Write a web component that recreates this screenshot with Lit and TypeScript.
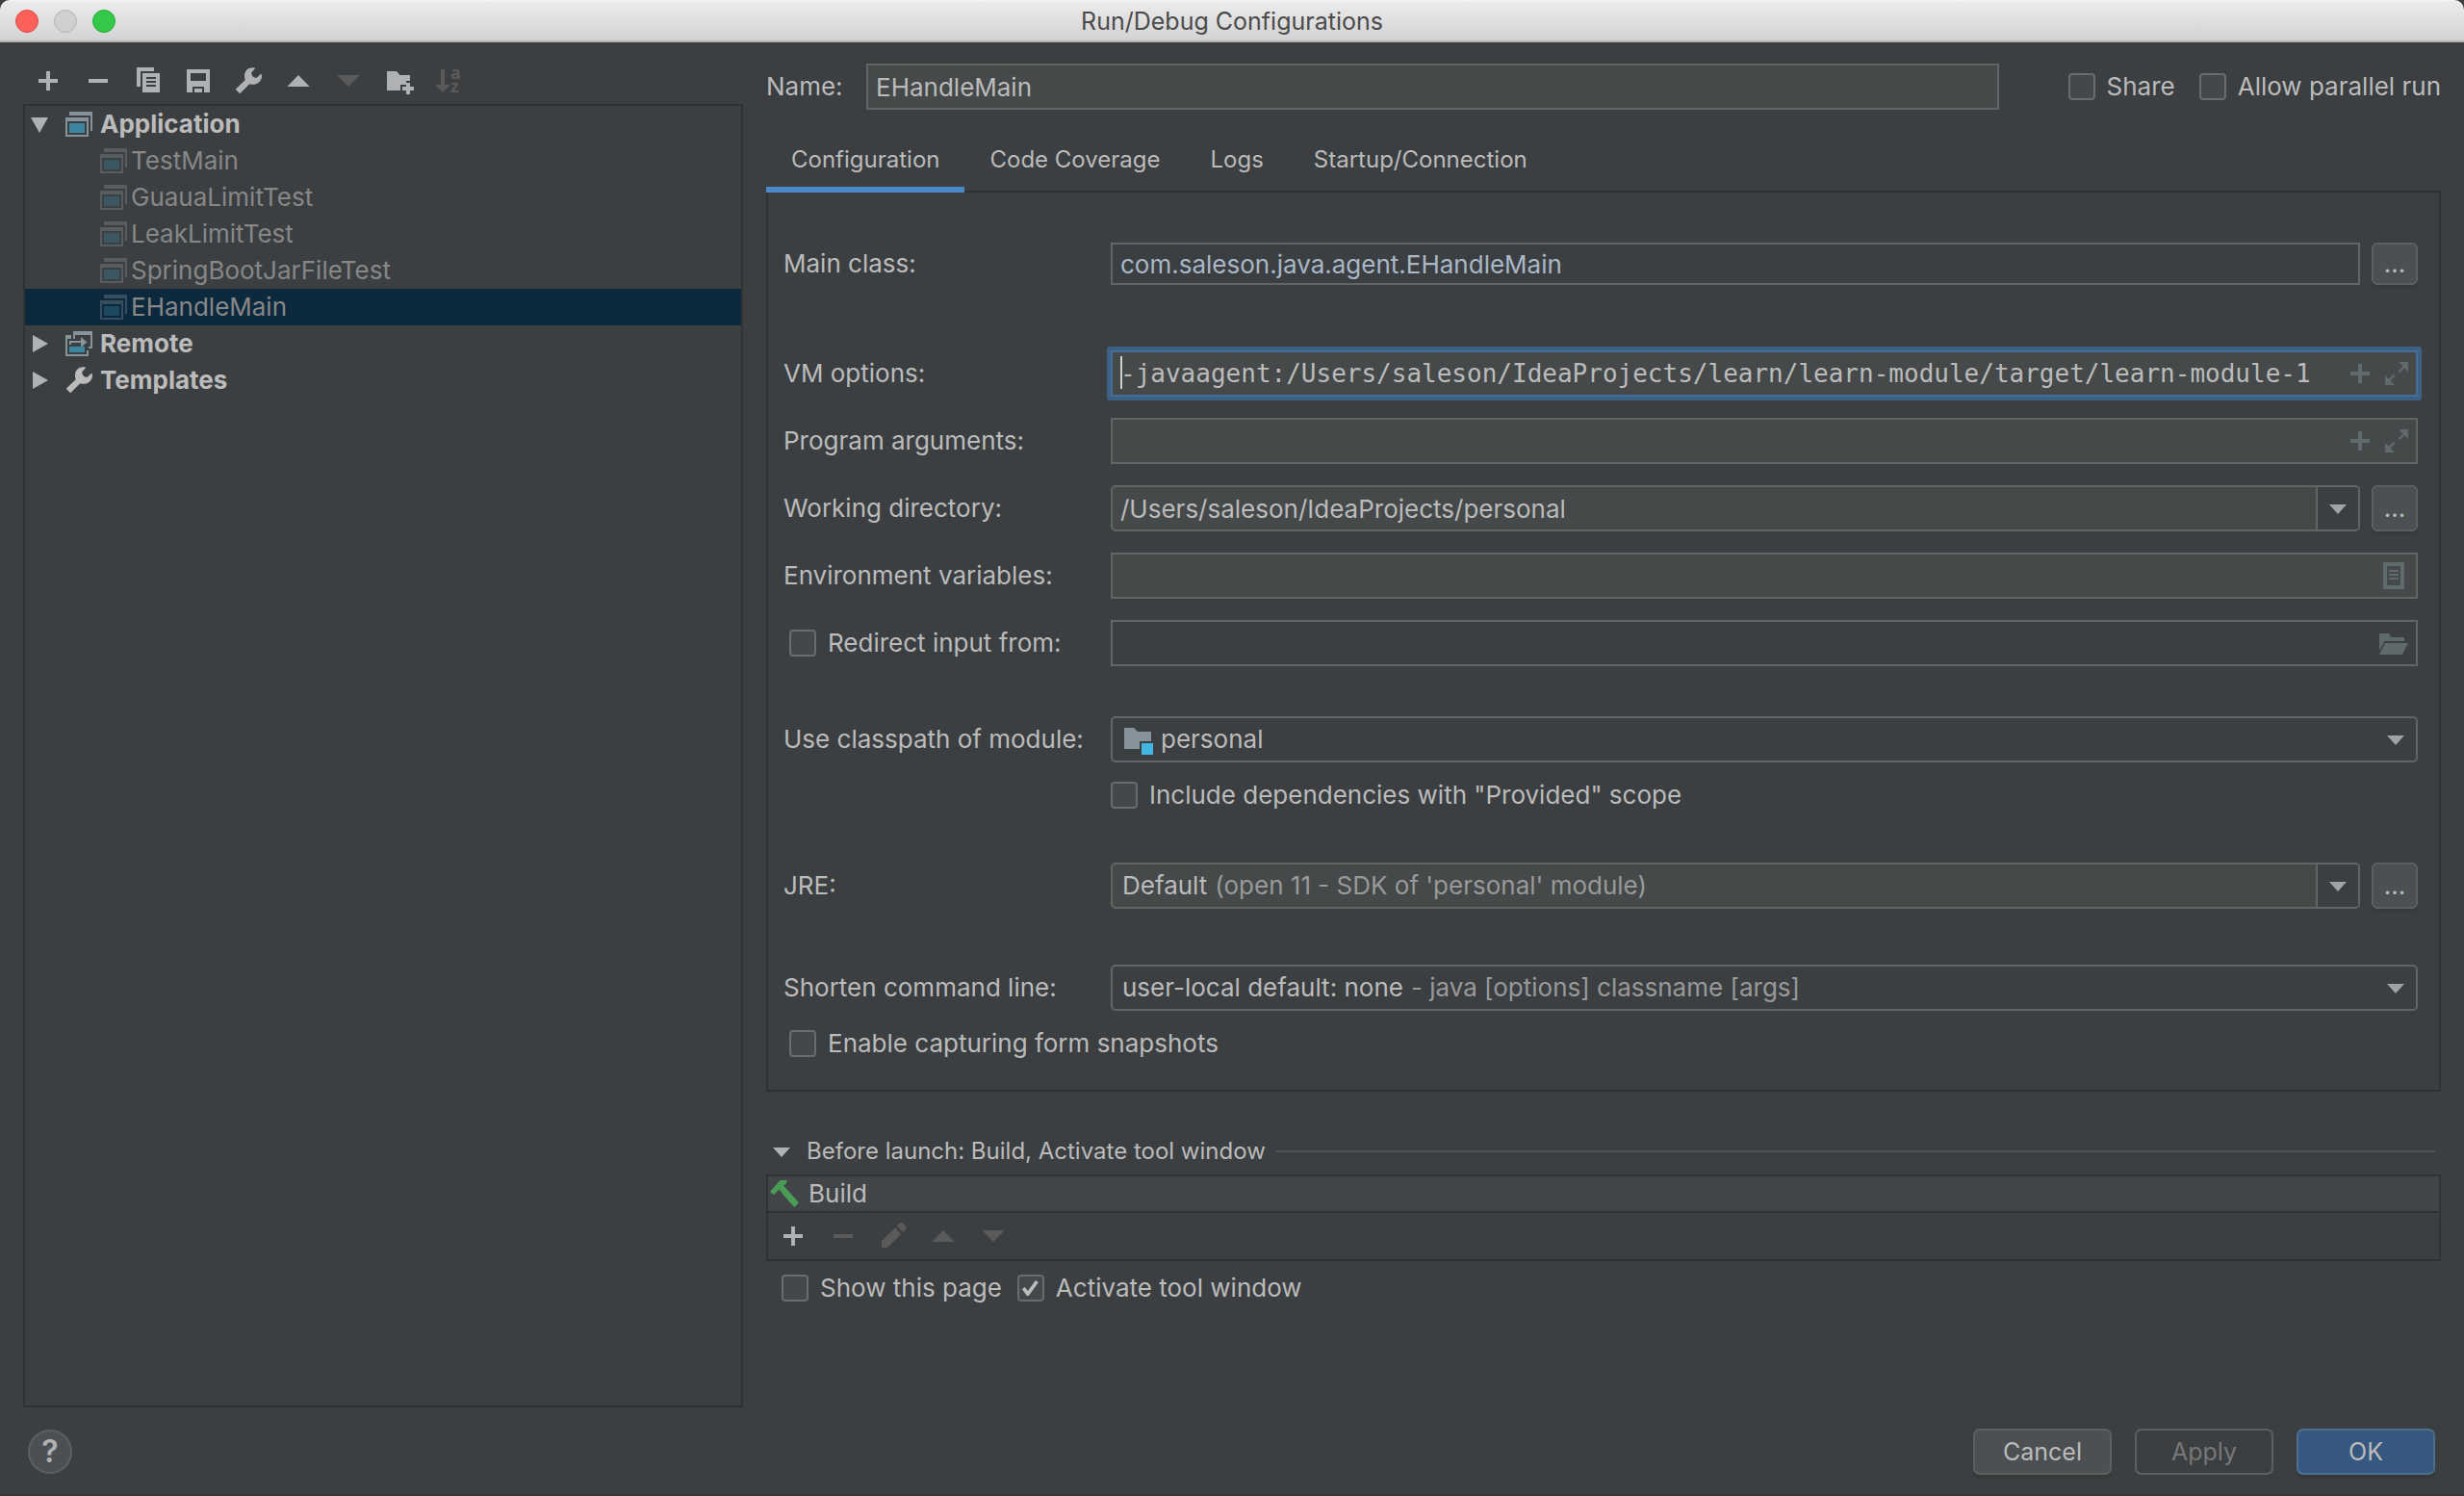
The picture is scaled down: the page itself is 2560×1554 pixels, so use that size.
import { LitElement, html, css, svg, nothing } from "lit";
import { customElement, property } from "lit/decorators.js";

const glyphs: Record<string, unknown> = {
  plus: svg`<path d="M14 6h4v8h8v4h-8v8h-4v-8H6v-4h8z"/>`,
  minus: svg`<path d="M6 14h20v4H6z"/>`,
  copy: svg`<path d="M4 2h18v4H8v16H4z"/><path fill-rule="evenodd" d="M10 8h18v20H10zM14 12v2h10v-2zM14 16v2h10v-2zM14 20v2h10v-2z"/>`,
  save: svg`<path fill-rule="evenodd" d="M4 4h24v24h-6v-6H10v6H4zM8 8v8h16V8z"/><path d="M12 24h8v4h-8z"/>`,
  wrench: svg`<path d="M23.3 2.8C18 1 12 4.5 12 10.5C12 12.5 12.3 14 12.8 15L2.7 24.8L7.2 29.3L17.3 19.2C23 21.5 29.8 17.5 30 11.5C30 10.2 29.8 9.2 29.3 8.5L24.8 12.8C22 13.2 19 10.5 19.3 7.2z"/>`,
  up: svg`<path d="M16 10L27.7 22H4.3z"/>`,
  down: svg`<path d="M4.3 10H27.7L16 22z"/>`,
  folderPlus: svg`<path d="M4 6h10l3.5 4H28v6h-4v4h-6v6H4z"/><path d="M24 18h4v4h4v4h-4v4h-4v-4h-4v-4h4z"/>`,
  sort: svg`<path d="M8 4h4v16h5.7L10 28 2.3 20H8z"/><text class="letter"><tspan x="18" y="14">a</tspan><tspan x="18" y="28">z</tspan></text>`,
  open: svg`<path d="M6 9H24L15 25z"/>`,
  closed: svg`<path d="M8 7L24 16L8 25z"/>`,
  app: svg`<g fill="#87939a"><path d="M6 3h24v20h-2V7H6z"/><path fill-rule="evenodd" d="M2 9h24v20H2zM4 13v14h20V13z"/></g><path fill="#3e86a0" d="M6 15h16v10H6z"/>`,
  remote: svg`<g fill="#87939a"><path d="M10 3h20v18h-4v-2h2V7H12v4h-2z"/><path d="M2 7h6v4H4v16h20v-4h2v6H2z"/><path d="M6 13h12V9l6.5 5.5L18 20v-5H8v2H6z"/></g><path fill="#3e86a0" d="M6 19h16v6H6z"/>`,
  expand: svg`<path d="M18 4h10v10l-3.8-3.8-5 5-1.7-1.7 5-5z"/><path d="M14 28H4V18l3.8 3.8 5-5 1.7 1.7-5 5z"/>`,
  doc: svg`<path fill-rule="evenodd" d="M2 2h22v28H2zM6 6v20h14V6z"/><path d="M8 10h10v2H8zM8 14h10v2H8zM8 18h10v2H8z"/>`,
  folderOpen: svg`<path d="M-2 6H8l2 4h14v4H3.5L-2 24z"/><path d="M4 16h24l-6 12H-2z"/>`,
  module: svg`<path fill="#87939a" d="M2 4h10l4 4h14v10H18v8H2z"/><path fill="#40b6e0" d="M20 20h12v12H20z"/>`,
  combo: svg`<path d="M7 12H25L16 22z"/>`,
  hammer: svg`<path fill="#499c54" d="M2 14L12.7 2H20L19 5.2L16 7.6L32 25.3L27.3 30L16 17.5L11.5 11.6L6 17.3z"/>`,
  pencil: svg`<path d="M4 28V21.3L18 7.3L24 14L10 28z"/><path d="M19.8 5.6L23 2.5Q24.6 1.6 26 2.6L29.4 6Q30.4 7.6 29.4 8.8L26.4 12z"/>`,
};

const icon = (name: string) =>
  html`<svg class="icon" viewBox="0 0 32 32" aria-hidden="true">${glyphs[name]}</svg>`;

const shared = css`
  * { box-sizing: border-box; }
  button, input, select { font: inherit; color: inherit; margin: 0; padding: 0; outline: none; }
  .icon { width: 32px; height: 32px; flex: none; display: block; fill: currentColor; overflow: visible; }
  .letter { font: bold 18px "Open Sans", sans-serif; }
  .bare { background: none; border: 0; display: flex; color: #afb1b3; }
  .bare:disabled { color: #5a5a5a; }
`;

/** Row of icon buttons. */
@customElement("icon-toolbar")
export class IconToolbar extends LitElement {
  @property({ attribute: false }) items: [string, string, boolean?][] = [];
  static styles = [
    shared,
    css`
      :host { display: flex; gap: 20px; padding: 0 10px; }
    `,
  ];
  render() {
    return this.items.map(
      ([name, label, off]) =>
        html`<button class="bare" aria-label=${label} ?disabled=${off}>${icon(name)}</button>`
    );
  }
}

/** Check box with its caption. */
@customElement("check-option")
export class CheckOption extends LitElement {
  @property() text = "";
  @property({ type: Boolean }) checked = false;
  static styles = [
    shared,
    css`
      :host { display: block; }
      .option { display: flex; align-items: center; gap: 12px; height: 28px; white-space: nowrap; }
      .box { appearance: none; width: 28px; height: 28px; flex: none; border: 2px solid #6b6b6b; border-radius: 4px; background: #43494a; }
      .box:checked::before {
        content: ""; display: block; height: 100%; background: #bbbbbb;
        clip-path: polygon(3px 13px, 6px 11px, 9px 15px, 17px 4px, 20px 6px, 10px 20px, 8px 20px);
      }
    `,
  ];
  render() {
    return html`<label class="option"><input class="box" type="checkbox" .checked=${this.checked} />${this.text}</label>`;
  }
}

const toolbar: [string, string, boolean?][] = [
  ["plus", "Add"],
  ["minus", "Remove"],
  ["copy", "Copy"],
  ["save", "Save"],
  ["wrench", "Edit templates"],
  ["up", "Move up"],
  ["down", "Move down", true],
  ["folderPlus", "New folder"],
  ["sort", "Sort", true],
];

const launchTools: [string, string, boolean?][] = [
  ["plus", "Add task"],
  ["minus", "Remove task", true],
  ["pencil", "Edit task", true],
  ["up", "Move task up", true],
  ["down", "Move task down", true],
];

const tree = [
  { text: "Application", icon: "app", open: true, children: ["TestMain", "GuauaLimitTest", "LeakLimitTest", "SpringBootJarFileTest", "EHandleMain"] },
  { text: "Remote", icon: "remote", open: false, children: [] },
  { text: "Templates", icon: "wrench", open: false, children: [] },
];
const selected = "EHandleMain";
const tabs = ["Configuration", "Code Coverage", "Logs", "Startup/Connection"];

@customElement("app-root")
export class AppRoot extends LitElement {
  static styles = [
    shared,
    css`
      :host {
        display: flex; flex-direction: column; min-height: 100vh; box-sizing: border-box;
        background: #3c3f41; color: #bbbbbb; border-bottom: 2px solid #37393b;
        font: 26px/32px Inter, "Liberation Sans", sans-serif;
      }
      .titlebar {
        display: grid; grid-template-columns: 1fr auto 1fr; align-items: center; height: 44px; padding: 2px 16px 0;
        background: linear-gradient(#f6f6f6 0, #ebebeb 3px, #d2d2d2 100%); border-bottom: 2px solid #b3b3b3;
        border-radius: 10px 10px 0 0; color: #4b4b4b;
      }
      .lights { display: flex; gap: 16px; }
      .light { width: 24px; height: 24px; border-radius: 50%; border: 1px solid; }
      .close { background: #fc605b; border-color: #df4744; }
      .minimise { background: #d0d0d0; border-color: #b4b4b4; }
      .zoom { background: #34c84a; border-color: #27aa35; }
      .title { margin: 0; font: inherit; font-size: 25px; }

      .body { flex: 1; display: grid; grid-template-columns: 187fr 435fr; gap: 24px; padding: 22px 24px 0; }
      .side { display: flex; flex-direction: column; gap: 8px; padding-top: 2px; }
      .tree { flex: 1; border: 2px solid #323232; margin: 0; padding: 0; list-style: none; }
      .leaves { margin: 0; padding: 0; list-style: none; }
      .node { display: flex; align-items: center; height: 38px; gap: 6px; padding-left: 4px; font-weight: 700; }
      .twist { width: 24px; margin-right: 6px; justify-content: center; }
      .leaf { display: flex; align-items: center; height: 38px; gap: 2px; padding-left: 76px; color: #878787; }
      .leaf .icon { opacity: 0.35; }
      .selected { background: #0d293e; }

      .name-row { display: flex; align-items: center; height: 48px; }
      .name-row label { flex: 0 0 104px; }
      .name-row .field { flex: 1; margin-right: 72px; }
      .share { margin-right: 25px; }

      .tabs { display: flex; margin-top: 24px; position: relative; }
      .tab { height: 62px; padding: 0 26px; background: none; border: 0; border-bottom: 6px solid transparent; font-size: 24px; }
      .active { border-bottom-color: #4a88c7; }
      .panel {
        margin-top: -2px; border: 2px solid #323232; padding: 52px 22px 34px 16px;
        display: flex; flex-direction: column; gap: 22px;
      }
      .row { display: flex; align-items: center; min-height: 48px; }
      .row > :first-child { flex: 0 0 340px; white-space: nowrap; }
      .main-class { min-height: 44px; margin-bottom: 46px; }
      .main-class .field, .main-class .more { height: 44px; }
      .row > .redirect { padding-left: 6px; }
      .module { margin-top: 30px; }
      .provided { margin: -2px 0 34px 340px; }
      .shorten { margin-top: 36px; }
      .snapshots { margin: -2px 0 0 6px; }

      .field {
        flex: 1; min-width: 0; height: 48px; display: flex; align-items: center; position: relative;
        background: #45494a; border: 2px solid #646464;
      }
      .plain { background: #3c3f41; }
      .round { border-radius: 5px; }
      .text { flex: 1; min-width: 0; height: 100%; padding: 0 8px; border: 0; background: none; }
      .code { color: #a9b7c6; }
      .focused { border-color: #466d94; box-shadow: 0 0 0 4px #3d6185; border-radius: 1px; }
      .mono { font-family: "DejaVu Sans Mono", monospace; padding-right: 0; }
      .caret { position: absolute; left: 8px; top: 4px; width: 2px; height: 34px; background: #cfcfcf; }
      .tools { display: flex; gap: 6px; padding-right: 4px; }
      .tools .bare { color: #5f6a6d; }
      .choice { appearance: none; border: 0; background: none; height: 100%; field-sizing: content; }
      .lead { padding-left: 10px; gap: 8px; }
      .lead .wide { flex: 1; min-width: 0; }
      .hint { flex: 1; color: #999999; white-space: nowrap; }
      .drop { width: 42px; align-self: stretch; align-items: center; justify-content: center; color: #9fa2a6; }
      .split { border-left: 2px solid #646464; width: 44px; background: #3c3f41; border-radius: 0 3px 3px 0; }
      .more {
        width: 48px; height: 48px; margin-left: 12px; border: 2px solid #5e6060; border-radius: 6px;
        background: #4c5052; box-shadow: 0 4px 0 #37393b;
      }

      .fold { display: flex; align-items: center; height: 32px; margin-top: 46px; padding: 0 6px 0 0; gap: 10px; font-size: 24px; }
      .fold .bare { gap: 10px; align-items: center; color: #bbbbbb; }
      .fold .icon { color: #afb1b3; }
      .rule { flex: 1; height: 2px; border: 0; margin: 0; background: #515151; }
      .tasks { border: 2px solid #323232; margin-top: 8px; }
      .task { display: flex; align-items: center; gap: 10px; height: 36px; background: #414547; }
      .task-tools { border-top: 2px solid #323232; padding: 8px 0; }
      .after { display: flex; gap: 16px; padding: 14px 16px; }

      .footer { display: flex; align-items: center; gap: 24px; height: 90px; padding: 2px 30px 0 29px; font-size: 25px; }
      .help {
        width: 46px; height: 46px; border-radius: 50%; border: 2px solid #5e6060; background: #4c5052;
        font-size: 32px; font-weight: 600; margin-right: auto; color: #afb1b3;
      }
      .action { width: 144px; height: 48px; border: 2px solid #5e6060; border-radius: 7px; background: #4c5052; box-shadow: 0 4px 0 #37393b; }
      .action:disabled { background: none; color: #777777; box-shadow: none; }
      .primary { background: #365880; border-color: #4c708c; }
    `,
  ];

  private renderTree() {
    return html`<ul class="tree">
      ${tree.map(
        (group) => html`<li>
          <div class="node">
            <button class="bare twist" aria-label="Toggle ${group.text}" aria-expanded=${group.open}>${icon(group.open ? "open" : "closed")}</button>
            ${icon(group.icon)}<span>${group.text}</span>
          </div>
          ${group.children.length
            ? html`<ul class="leaves">
                ${group.children.map(
                  (leaf) => html`<li class="leaf ${leaf === selected ? "selected" : ""}">${icon("app")}<span>${leaf}</span></li>`
                )}
              </ul>`
            : nothing}
        </li>`
      )}
    </ul>`;
  }

  private more(label: string) {
    return html`<button class="more" aria-label=${label}>...</button>`;
  }

  private tool(name: string, label: string) {
    return html`<button class="bare" aria-label=${label}>${icon(name)}</button>`;
  }

  private renderForm() {
    return html`<section class="panel">
      <div class="row main-class">
        <label for="main">Main class:</label>
        <div class="field plain"><input id="main" class="text code" value="com.saleson.java.agent.EHandleMain" /></div>
        ${this.more("Choose main class")}
      </div>
      <div class="row">
        <label for="vm">VM options:</label>
        <div class="field focused">
          <input id="vm" class="text mono" value="-javaagent:/Users/saleson/IdeaProjects/learn/learn-module/target/learn-module-1" />
          <span class="caret"></span>
          <div class="tools">${this.tool("plus", "Insert macro")}${this.tool("expand", "Expand")}</div>
        </div>
      </div>
      <div class="row">
        <label for="args">Program arguments:</label>
        <div class="field">
          <input id="args" class="text" />
          <div class="tools">${this.tool("plus", "Insert macro")}${this.tool("expand", "Expand")}</div>
        </div>
      </div>
      <div class="row">
        <label for="dir">Working directory:</label>
        <div class="field round">
          <input id="dir" class="text" value="/Users/saleson/IdeaProjects/personal" />
          <button class="bare drop split" aria-label="Recent directories">${icon("combo")}</button>
        </div>
        ${this.more("Choose directory")}
      </div>
      <div class="row">
        <label for="env">Environment variables:</label>
        <div class="field">
          <input id="env" class="text" />
          <div class="tools">${this.tool("doc", "Edit variables")}</div>
        </div>
      </div>
      <div class="row">
        <check-option class="redirect" text="Redirect input from:"></check-option>
        <div class="field plain">
          <input class="text" aria-label="Redirect input from" />
          <div class="tools">${this.tool("folderOpen", "Browse")}</div>
        </div>
      </div>
      <div class="row module">
        <label for="module">Use classpath of module:</label>
        <div class="field plain round lead">
          ${icon("module")}
          <select id="module" class="choice wide"><option>personal</option></select>
          <span class="bare drop">${icon("combo")}</span>
        </div>
      </div>
      <check-option class="provided" text='Include dependencies with "Provided" scope'></check-option>
      <div class="row">
        <label for="jre">JRE:</label>
        <div class="field round lead">
          <select id="jre" class="choice"><option>Default</option></select>
          <span class="hint">(open 11 - SDK of 'personal' module)</span>
          <button class="bare drop split" aria-label="Choose JRE">${icon("combo")}</button>
        </div>
        ${this.more("Browse for JRE")}
      </div>
      <div class="row shorten">
        <label for="shorten">Shorten command line:</label>
        <div class="field plain round lead">
          <select id="shorten" class="choice"><option>user-local default: none</option></select>
          <span class="hint">- java [options] classname [args]</span>
          <span class="bare drop">${icon("combo")}</span>
        </div>
      </div>
      <check-option class="snapshots" text="Enable capturing form snapshots"></check-option>
    </section>`;
  }

  render() {
    return html`
      <header class="titlebar">
        <div class="lights">
          <button class="light close" aria-label="Close"></button>
          <button class="light minimise" aria-label="Minimise"></button>
          <button class="light zoom" aria-label="Zoom"></button>
        </div>
        <h1 class="title">Run/Debug Configurations</h1>
      </header>
      <div class="body">
        <aside class="side">
          <icon-toolbar .items=${toolbar}></icon-toolbar>
          ${this.renderTree()}
        </aside>
        <main>
          <div class="name-row">
            <label for="name">Name:</label>
            <div class="field"><input id="name" class="text" value="EHandleMain" /></div>
            <check-option class="share" text="Share"></check-option>
            <check-option text="Allow parallel run"></check-option>
          </div>
          <nav class="tabs" role="tablist">
            ${tabs.map(
              (tab, i) => html`<button class="tab ${i === 0 ? "active" : ""}" role="tab" aria-selected=${i === 0}>${tab}</button>`
            )}
          </nav>
          ${this.renderForm()}
          <div class="fold">
            <button class="bare" aria-expanded="true">${icon("combo")}Before launch: Build, Activate tool window</button>
            <hr class="rule" />
          </div>
          <section class="tasks">
            <div class="task">${icon("hammer")}<span>Build</span></div>
            <div class="task-tools"><icon-toolbar .items=${launchTools}></icon-toolbar></div>
          </section>
          <div class="after">
            <check-option text="Show this page"></check-option>
            <check-option text="Activate tool window" checked></check-option>
          </div>
        </main>
      </div>
      <footer class="footer">
        <button class="help" aria-label="Help">?</button>
        <button class="action">Cancel</button>
        <button class="action" disabled>Apply</button>
        <button class="action primary">OK</button>
      </footer>
    `;
  }
}
